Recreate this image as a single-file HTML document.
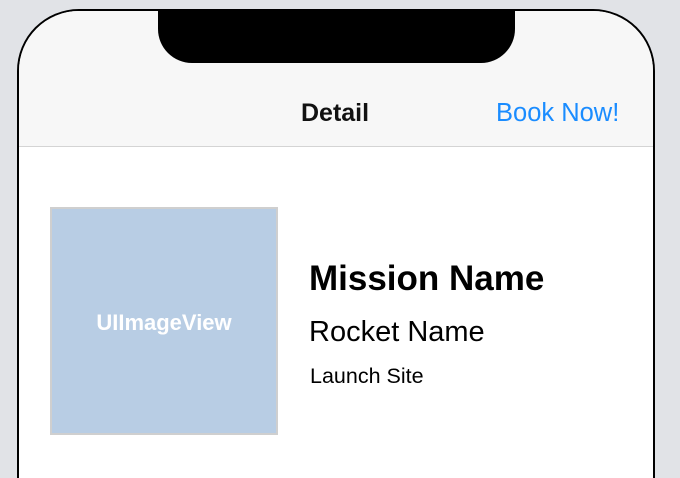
<!DOCTYPE html>
<html style="overflow:hidden;height:478px"><head><style>
body{margin:0;width:680px;height:478px;background:#e1e3e7;position:relative;overflow:hidden;font-family:"Liberation Sans",Arial,sans-serif}
.phone{position:absolute;left:17px;top:9px;width:634px;height:467px;border:2px solid #000;border-bottom:none;border-radius:62px 62px 0 0;background:#fff;overflow:hidden}
.nav{position:absolute;left:0;top:0;width:100%;height:135px;background:#f7f7f7;border-bottom:1px solid #d4d4d4}
.notch{position:absolute;left:139px;top:-2px;width:357px;height:54px;background:#000;border-radius:0 0 34px 34px}
.t{position:absolute;white-space:nowrap}
.img{position:absolute;left:31px;top:196px;width:224px;height:224px;background:#b8cde4;border:2px solid #cfcfcf;box-sizing:content-box}
</style></head><body>
<div class="phone">
<div class="nav"></div>
<div class="notch"></div>
<div class="t" style="left:282px;top:88px;font-size:25px;font-weight:bold;color:#111">Detail</div>
<div class="t" style="left:477px;top:88px;font-size:25.5px;color:#1a8cff">Book Now!</div>
<div class="img"><div class="t" style="left:0;width:224px;text-align:center;top:101px;font-size:22px;font-weight:bold;color:#fff">UIImageView</div></div>
<div class="t" style="left:290px;top:248px;font-size:35px;font-weight:bold;color:#000">Mission Name</div>
<div class="t" style="left:290px;top:305px;font-size:29px;color:#000">Rocket Name</div>
<div class="t" style="left:291px;top:353px;font-size:21.5px;color:#000">Launch Site</div>
</div>
</body></html>
